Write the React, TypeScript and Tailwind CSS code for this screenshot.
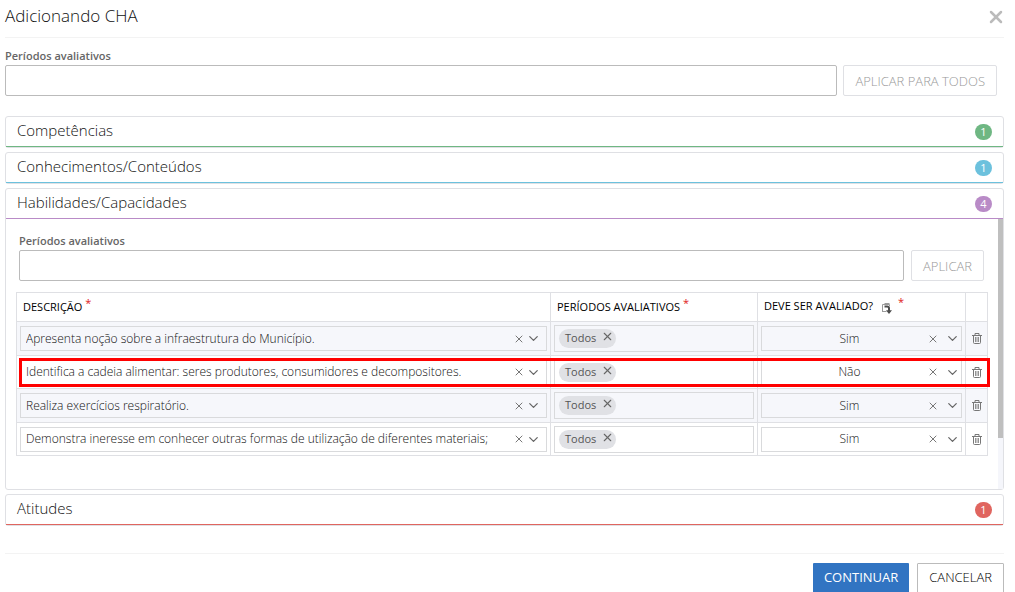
import React, { useState } from 'react';
import { ChevronDown, X } from 'lucide-react';

interface Habilidade {
  id: number;
  descricao: string;
  avaliado: 'Sim' | 'Não';
  destaque?: boolean;
}

const HABILIDADES: Habilidade[] = [
  { id: 1, descricao: 'Apresenta noção sobre a infraestrutura do Município.', avaliado: 'Sim' },
  { id: 2, descricao: 'Identifica a cadeia alimentar: seres produtores, consumidores e decompositores.', avaliado: 'Não', destaque: true },
  { id: 3, descricao: 'Realiza exercícios respiratório.', avaliado: 'Sim' },
  { id: 4, descricao: 'Demonstra ineresse em conhecer outras formas de utilização de diferentes materiais;', avaliado: 'Sim' },
];

const TrashIcon: React.FC = () => (
  <svg width="10" height="11" viewBox="0 0 10 11" fill="none" stroke="#777777">
    <path d="M0 2.5h10M3 2V.5h4V2M1.5 3v6.5q0 1 1 1h5q1 0 1-1V3" />
    <path d="M3.5 4v5M5 4v5M6.5 4v5" strokeWidth="0.8" />
  </svg>
);

const FillDownIcon: React.FC = () => (
  <svg width="10" height="11" viewBox="0 0 10 11" fill="none">
    <path d="M.5 9V1.5h7V3M.5 8.5h4M2.5.5h5" stroke="#9a9a9a" />
    <path d="M2.5 3.5h2.7q1.8 0 1.8 1.8V8" stroke="#4d4d4d" strokeWidth="2" />
    <path d="M4 7.2h6L7 11z" fill="#4d4d4d" />
  </svg>
);

interface SectionProps {
  title: string;
  count: number;
  line: string;
  badge: string;
  children?: React.ReactNode;
}

const Section: React.FC<SectionProps> = ({ title, count, line, badge, children }) => (
  <section className="border border-[#dfe0e4] rounded-[3px] mb-1">
    <button
      type="button"
      aria-expanded={!!children}
      className={`flex w-full items-center justify-between h-[30px] pl-[11px] pr-[11px] border-b ${line}`}
    >
      <span className="pb-1 text-[15px] leading-5 font-light text-[#111111]">{title}</span>
      <span className={`flex items-center justify-center w-[17px] h-4 rounded-full text-[11px] leading-4 text-white ${badge}`}>
        {count}
      </span>
    </button>
    {children}
  </section>
);

interface SelectFieldProps {
  label: string;
  value: string;
  options: string[];
  centered?: boolean;
}

const SelectField: React.FC<SelectFieldProps> = ({ label, value, options, centered }) => {
  const [selected, setSelected] = useState(value);

  return (
    <div className="relative flex items-center">
      <select
        aria-label={label}
        value={selected}
        onChange={(e) => setSelected(e.target.value)}
        className={`appearance-none w-full h-[25px] border border-[#d9dadc] bg-transparent text-xs font-light text-[#111111] outline-none ${
          centered ? 'text-center pr-6' : 'pl-[5px] pr-9'
        }`}
      >
        <option value="" />
        {options.map((o) => (
          <option key={o} value={o}>{o}</option>
        ))}
      </select>
      <button
        type="button"
        title="Limpar"
        onClick={() => setSelected('')}
        className={`absolute ${centered ? 'right-[23px]' : 'right-[22px]'}`}
      >
        <X className="w-3 h-3 text-[#777777]" strokeWidth={2} />
      </button>
      <ChevronDown
        className={`absolute w-[15px] h-[15px] text-[#666666] pointer-events-none ${centered ? 'right-[2px]' : 'right-[6px]'}`}
      />
    </div>
  );
};

const PeriodosField: React.FC = () => {
  const [todos, setTodos] = useState(true);

  return (
    <div className="flex items-center h-[27px] border border-[#d9dadc] px-1">
      {todos && (
        <span className="flex items-center gap-[5px] h-[19px] pl-[6px] pr-[2px] rounded-full bg-[#e0e1e5] text-[11px] leading-4 text-[#555555]">
          <span className="pb-px">Todos</span>
          <button type="button" title="Remover" onClick={() => setTodos(false)} className="pb-1">
            <X className="w-[13px] h-[13px] text-[#666666]" strokeWidth={2} />
          </button>
        </span>
      )}
    </div>
  );
};

const Asterisk: React.FC = () => <sup className="top-[-4px] text-[11px] leading-none text-[#e02020]">*</sup>;

const App: React.FC = () => {
  const th = 'h-[29px] border border-[#dfe0e4] pl-[6px] text-left align-middle text-[11px] leading-4 font-medium text-black whitespace-nowrap';
  const td = 'border border-[#dfe0e4] px-[3px] py-0 align-middle';
  const label = 'block text-[11px] leading-4 font-semibold text-[#666666] mb-px';
  const input = 'block w-full h-[31px] px-2 border border-[#bbbbbb] rounded-[2px] text-xs outline-none';
  const applyButton = 'h-[31px] px-[11px] border border-[#dfe0e4] rounded-[2px] text-[13px] leading-5 font-light text-[#999999]';

  return (
    <div className="h-screen overflow-hidden bg-white pl-[5px] pr-[11px] font-['Open_Sans','Noto_Sans',sans-serif] text-[#444444]">
      <header className="flex items-center justify-between h-[38px] pb-1 border-b border-[#f3f3f3]">
        <h1 className="pb-[2px] text-[17px] leading-6 font-light text-[#111111]">Adicionando CHA</h1>
        <button type="button" title="Fechar" className="-mr-[2px]">
          <X className="w-5 h-5 text-[#bbbbbb]" strokeWidth={3} />
        </button>
      </header>

      <div className="flex items-end gap-[6px] pt-[10px] pr-[7px]">
        <div className="flex-1">
          <label htmlFor="periodos-todos" className={label}>Períodos avaliativos</label>
          <input id="periodos-todos" className={input} />
        </div>
        <button type="button" disabled className={applyButton}>APLICAR PARA TODOS</button>
      </div>

      <main className="pt-5">
        <Section title="Competências" count={1} line="border-[#6fb783]" badge="bg-[#6fb783]" />
        <Section title="Conhecimentos/Conteúdos" count={1} line="border-[#6cc1dd]" badge="bg-[#6cc1dd]" />
        <Section title="Habilidades/Capacidades" count={4} line="border-[#b98bc7]" badge="bg-[#b98bc7]">
          <div className="flex">
            <div className="flex-1 pl-[10px] pr-[10px] pt-[14px] pb-[33px]">
              <div className="flex items-end gap-[7px] pl-[3px] pr-1">
                <div className="flex-1">
                  <label htmlFor="periodos-hab" className={label}>Períodos avaliativos</label>
                  <input id="periodos-hab" className={input} />
                </div>
                <button type="button" disabled className={applyButton}>APLICAR</button>
              </div>

              <table className="w-full mt-[11px] table-fixed border-collapse">
                <colgroup>
                  <col />
                  <col className="w-[207px]" />
                  <col className="w-[208px]" />
                  <col className="w-[22px]" />
                </colgroup>
                <thead>
                  <tr>
                    <th className={th}>DESCRIÇÃO <Asterisk /></th>
                    <th className={th}>PERÍODOS AVALIATIVOS <Asterisk /></th>
                    <th className={th}>
                      <span className="flex items-center pb-[2px]">
                        DEVE SER AVALIADO?
                        <span className="ml-[9px] mr-[6px] pt-1"><FillDownIcon /></span>
                        <span className="pb-2 text-[#e02020]">*</span>
                      </span>
                    </th>
                    <th className={th} aria-label="Ações" />
                  </tr>
                </thead>
                <tbody>
                  {HABILIDADES.map((h) => (
                    <tr key={h.id} className="relative h-[34px] odd:bg-[#f6f7fb] even:h-[33px]">
                      <td className={td}>
                        <SelectField label="Descrição" value={h.descricao} options={HABILIDADES.map((x) => x.descricao)} />
                        {h.destaque && (
                          <span className="absolute top-[2px] left-[2px] right-[-2px] h-[29px] border-3 border-[#ff0000] pointer-events-none z-10" />
                        )}
                      </td>
                      <td className={td}><PeriodosField /></td>
                      <td className={td}>
                        <SelectField label="Deve ser avaliado?" value={h.avaliado} options={['Sim', 'Não']} centered />
                      </td>
                      <td className={td}>
                        <button type="button" title="Excluir" className="flex w-full justify-center">
                          <TrashIcon />
                        </button>
                      </td>
                    </tr>
                  ))}
                </tbody>
              </table>
            </div>

            {/* Scroll track */}
            <div className="w-[5px] bg-[#f5f6fb]">
              <div className="h-[219px] bg-[#bfbfbf]" />
            </div>
          </div>
        </Section>
        <Section title="Atitudes" count={1} line="border-[#e0655f]" badge="bg-[#e0655f]" />
      </main>

      <footer className="flex justify-end gap-2 mt-[27px] pt-[9px] border-t border-[#f3f3f3]">
        <button type="button" className="h-8 px-[11px] pb-1 bg-[#3174c2] text-[13px] leading-5 text-white rounded-[1px]">
          CONTINUAR
        </button>
        <button type="button" className="h-8 px-[11px] pb-1 border border-[#bbbbbb] rounded-[1px] bg-white text-[13px] leading-5 font-light text-black">
          CANCELAR
        </button>
      </footer>
    </div>
  );
};

export default App;
